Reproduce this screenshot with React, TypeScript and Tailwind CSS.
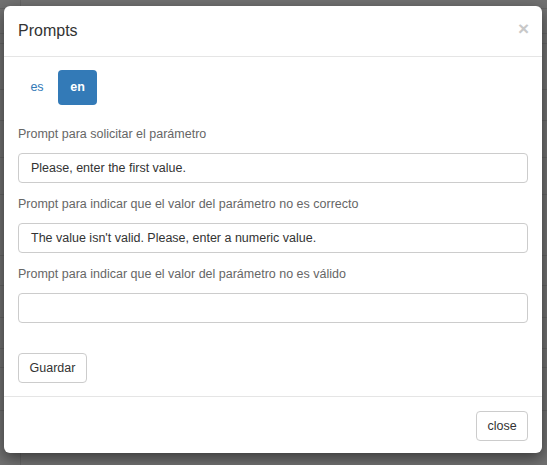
import React from 'react';

const rows = [8, 33, 43, 89, 120, 157, 194, 255, 285, 317, 348, 367, 410];

const fields = [
  { label: 'Prompt para solicitar el parámetro', value: 'Please, enter the first value.' },
  { label: 'Prompt para indicar que el valor del parámetro no es correcto', value: "The value isn't valid. Please, enter a numeric value." },
  { label: 'Prompt para indicar que el valor del parámetro no es válido', value: '' },
];

const App: React.FC = () => {
  return (
    <div className="relative w-[547px] h-[465px] overflow-hidden bg-[#727272] font-['Liberation_Sans',Arial,sans-serif]">
      {/* page behind the backdrop */}
      <div className="absolute inset-0">
        <div className="absolute left-[20px] top-0 bottom-0 border-l border-[#666]" />
        {rows.map((y) => (
          <div key={y} className="absolute left-0 right-0 border-t border-[#666]" style={{ top: y }} />
        ))}
      </div>

      {/* Modal */}
      <div className="relative ml-[4px] mt-[6px] w-[538px] bg-white rounded-[6px] shadow-[0_5px_15px_rgba(0,0,0,0.5)]">
        {/* Header */}
        <div className="h-[51px] pl-[14px] pr-[13px] flex items-center justify-between border-b border-[#e5e5e5]">
          <h4 className="text-[16px] text-[#333] leading-[20px]">Prompts</h4>
          <span className="text-[19px] font-bold text-[#c8c8c8] leading-none -mt-[6px]">×</span>
        </div>

        {/* Body */}
        <div className="px-[14px] pt-[13px] pb-[13px]">
          <div className="flex gap-[2px]">
            <span className="w-[38px] h-[35px] flex items-center justify-center text-[12.5px] text-[#337ab7] rounded-[4px]">es</span>
            <span className="w-[39px] h-[35px] flex items-center justify-center text-[12.5px] font-bold text-white bg-[#337ab7] rounded-[4px]">en</span>
          </div>

          <div className="mt-[19px] flex flex-col gap-[11px]">
            {fields.map((f) => (
              <div key={f.label} className="flex flex-col gap-[9px]">
                <label className="text-[12.5px] leading-[20px] text-[#666]">{f.label}</label>
                <div className="h-[30px] border border-[#ccc] rounded-[4px] px-[12px] flex items-center text-[12.5px] text-[#333]">
                  {f.value}
                </div>
              </div>
            ))}
          </div>

          <div className="mt-[30px]">
            <button className="h-[30px] w-[69px] border border-[#ccc] rounded-[4px] text-[12.5px] text-[#333] bg-white">
              Guardar
            </button>
          </div>
        </div>

        {/* Footer */}
        <div className="border-t border-[#e5e5e5] pt-[14px] pb-[12px] pr-[14px] flex justify-end">
          <button className="h-[30px] w-[52px] border border-[#ccc] rounded-[4px] text-[12.5px] text-[#333] bg-white">
            close
          </button>
        </div>
      </div>
    </div>
  );
};

export default App;
